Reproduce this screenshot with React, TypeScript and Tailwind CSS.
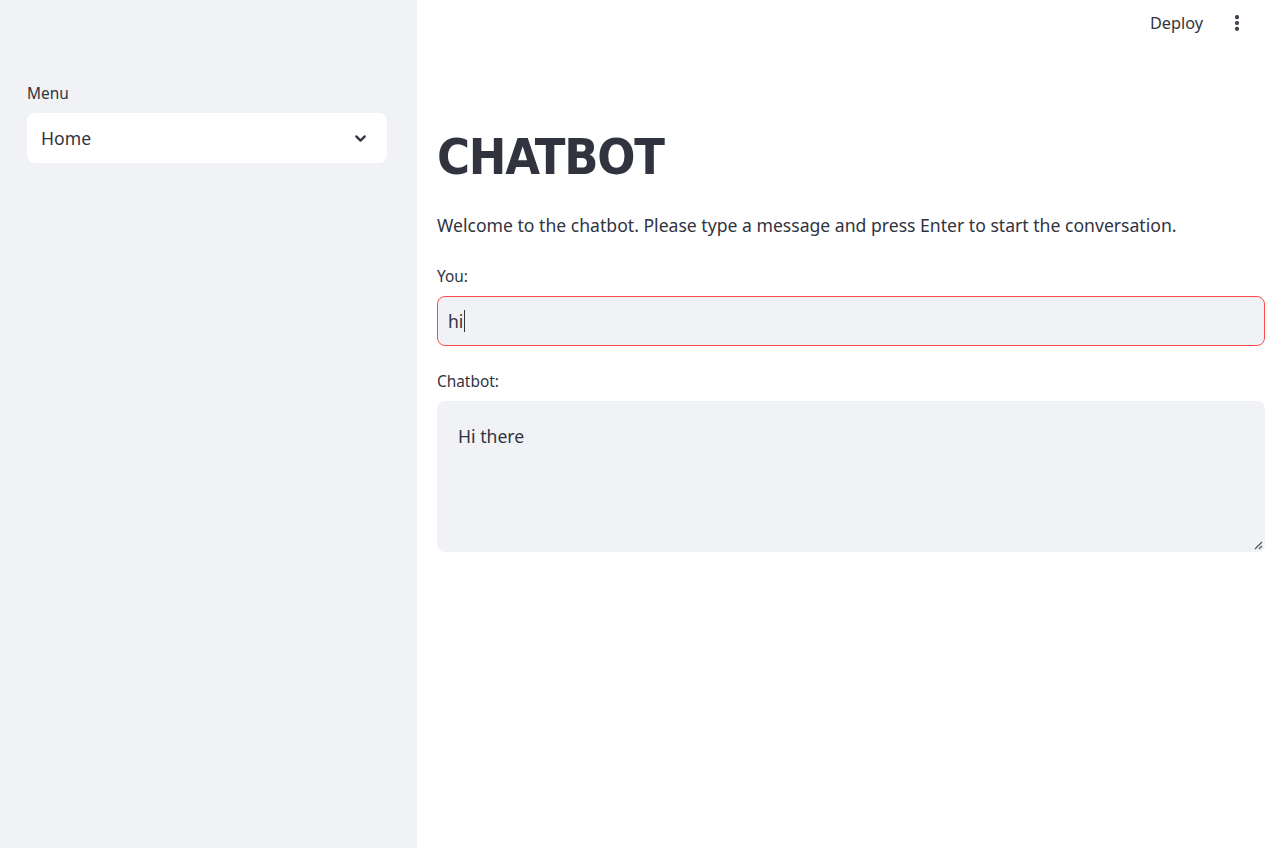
import { ChevronDown, EllipsisVertical } from 'lucide-react';

const font = { fontFamily: '"Noto Sans", sans-serif' };
const title = { fontFamily: '"DejaVu Sans Condensed", "Noto Sans", sans-serif' };

export default function App() {
  return (
    <div className="flex h-[848px] w-full overflow-hidden bg-white text-[#31333f]" style={font}>
      <aside className="w-[417px] shrink-0 bg-[#f0f2f6] pl-[27px] pr-[30px] pt-[84px]">
        <div className="text-[15.4px] leading-[20px]">Menu</div>
        <div className="mt-[9px] flex h-[50px] items-center justify-between rounded-[8px] bg-white pl-[14px] pr-[18px]">
          <span className="text-[17.6px]">Home</span>
          <ChevronDown size={17} strokeWidth={3.2} />
        </div>
      </aside>
      <main className="flex-1">
        <header className="flex h-[46px] items-center justify-end gap-[24px] pr-[30px]">
          <button className="text-[16.3px]">Deploy</button>
          <EllipsisVertical size={20} strokeWidth={3} />
        </header>
        <section className="pl-[20px] pr-[12px] pt-[82px]">
          <h1 className="text-[50px] font-bold leading-[58px] tracking-[-0.025em]" style={title}>CHATBOT</h1>
          <p className="mt-[25px] text-[17.6px] leading-[28px]">
            Welcome to the chatbot. Please type a message and press Enter to start the conversation.
          </p>
          <div className="mt-[28px] text-[15.4px] leading-[20px]">You:</div>
          <div className="mt-[9px] flex h-[50px] items-center rounded-[8px] border border-[#ff4b4b] bg-[#f0f2f6] px-[10px] text-[17.6px]">
            <span>hi</span>
            <span className="ml-[1px] h-[22px] w-[1px] bg-[#31333f]" />
          </div>
          <div className="mt-[26px] text-[15.4px] leading-[20px]">Chatbot:</div>
          <div className="relative mt-[9px] h-[151px] rounded-[8px] bg-[#f0f2f6] px-[21px] pt-[22px] text-[17.6px]">
            Hi there
            <svg className="absolute bottom-[2px] right-[2px]" width="9" height="9" viewBox="0 0 9 9">
              <path d="M8 1 L1 8 M8 5 L5 8" stroke="#555" strokeWidth="1.2" />
            </svg>
          </div>
        </section>
      </main>
    </div>
  );
}
